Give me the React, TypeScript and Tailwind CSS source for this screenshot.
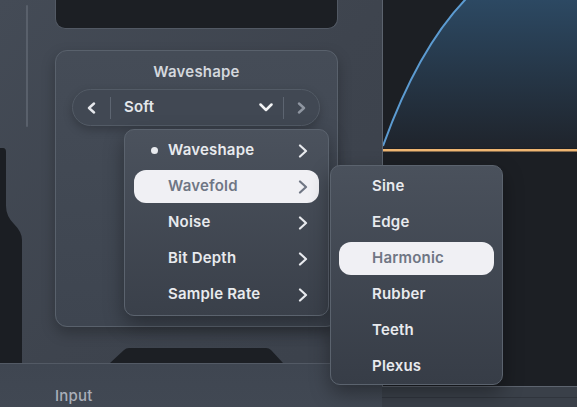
const font = { fontFamily: 'Inter, "Noto Sans", sans-serif' };

function ChevronRight({ className }: { className?: string }) {
  return (
    <svg width="10" height="14" viewBox="0 0 10 14" className={className}>
      <path d="M2 1.5 L8 7 L2 12.5" fill="none" stroke="currentColor" strokeWidth="2.2" strokeLinecap="round" strokeLinejoin="round" />
    </svg>
  );
}

function SmallChevron({ dir, className }: { dir: "left" | "right"; className?: string }) {
  return (
    <svg width="9" height="12" viewBox="0 0 9 12" className={className}>
      <path
        d={dir === "left" ? "M7 1.5 L2 6 L7 10.5" : "M2 1.5 L7 6 L2 10.5"}
        fill="none"
        stroke="currentColor"
        strokeWidth="2.4"
        strokeLinecap="round"
        strokeLinejoin="round"
      />
    </svg>
  );
}

const mainItems = [
  { label: "Waveshape", dot: true },
  { label: "Wavefold", active: true },
  { label: "Noise" },
  { label: "Bit Depth" },
  { label: "Sample Rate" },
];

const subItems = ["Sine", "Edge", "Harmonic", "Rubber", "Teeth", "Plexus"];

export default function App() {
  return (
    <div className="relative flex w-[577px] h-[407px] overflow-hidden bg-[#3d434d]" style={font}>
      {/* left panel */}
      <div className="flex flex-col w-[382px] h-full bg-gradient-to-br from-[#444b56] via-[#3e444e] to-[#3b414b]">
        <div className="flex h-[363px]">
          <div className="flex flex-col w-[55px]">
            <div className="ml-[26px] mt-[5px] w-[2px] h-[122px] rounded-full bg-[#59606b]" />
            <svg width="22" height="215" viewBox="0 0 22 215" className="mt-[21px]">
              <path d="M0 0 L3 0 Q6 0 6 4 L6 58 Q6 68 14 76 Q22 84 22 92 L22 215 L0 215 Z" fill="#1b1e23" />
            </svg>
          </div>
          <div className="flex flex-col w-[283px]">
            <div className="h-[29px] rounded-b-[10px] bg-[#1c1f24] border border-t-0 border-[#525964]" />
            <div className="mt-[21px] h-[277px] rounded-[12px] border border-[#59616c] bg-gradient-to-b from-[#454c57] to-[#3e4550] shadow-[0_6px_14px_rgba(0,0,0,0.25)]">
              <div className="pt-[11px] text-center text-[15px] leading-[20px] font-semibold tracking-[0.2px] text-[#d3d7dd]">
                Waveshape
              </div>
              <div className="mt-[7px] ml-[16px] flex items-center w-[248px] h-[37px] rounded-full border border-[#535b66] bg-[#414853] shadow-[0_4px_10px_rgba(0,0,0,0.22)]">
                <div className="flex items-center justify-center w-[37px] text-[#e6e8ec]">
                  <SmallChevron dir="left" />
                </div>
                <div className="w-px h-[22px] bg-[#5d6571]" />
                <div className="w-[148px] pl-[13px] text-[15px] font-semibold tracking-[0.2px] text-[#e4e7eb]">Soft</div>
                <svg width="14" height="9" viewBox="0 0 14 9" className="text-[#f2f3f5]">
                  <path d="M1.5 1.5 L7 7 L12.5 1.5" fill="none" stroke="currentColor" strokeWidth="2.5" strokeLinecap="round" strokeLinejoin="round" />
                </svg>
                <div className="ml-[10px] w-px h-[22px] bg-[#5d6571]" />
                <div className="flex items-center justify-center w-[35px] text-[#8f96a1]">
                  <SmallChevron dir="right" />
                </div>
              </div>
            </div>
            <svg width="173" height="15" viewBox="0 0 173 15" className="mt-[21px] ml-[55px]">
              <path d="M0 15 L14 2 Q16 0 19 0 L156 0 Q159 0 161 2 L173 15 Z" fill="#1c1f24" />
            </svg>
          </div>
        </div>
        <div className="flex-1 border-t border-[#535a65] bg-gradient-to-b from-[#3f4651] to-[#414853] pl-[55px] pt-[19px]">
          <span className="text-[15px] leading-[20px] font-medium tracking-[0.2px] text-[#a9afb9]">Input</span>
        </div>
      </div>

      {/* right graph */}
      <div className="flex flex-col flex-1">
        <div className="h-[386px] border-l border-[#5c636e] bg-[#1c1f24]">
          <svg width="194" height="386" viewBox="0 0 194 386">
            <defs>
              <linearGradient id="fill" x1="0" y1="0" x2="0" y2="1">
                <stop offset="0" stopColor="#2d4b66" />
                <stop offset="1" stopColor="#1f242c" />
              </linearGradient>
            </defs>
            <path d="M0 146 Q38 40 92 -10 L194 -10 L194 148 L0 148 Z" fill="url(#fill)" />
            <path d="M0 146 Q38 40 92 -10" fill="none" stroke="#5c9bd1" strokeWidth="2" />
            <rect x="0" y="149" width="194" height="2.5" fill="#efb672" />
          </svg>
        </div>
        <div className="flex-1 border-t border-[#5d646f] bg-[#3a4049]">
          <div className="mt-[10px] border-t border-[#30353d]" />
        </div>
      </div>

      {/* main menu */}
      <div className="absolute left-[124px] top-[129px] w-[205px] rounded-[10px] border border-[#5b636e] bg-gradient-to-b from-[#4b525d] to-[#3a404a] px-[9px] pt-[4px] pb-[4px] flex flex-col gap-[3px] shadow-[0_8px_20px_rgba(0,0,0,0.35)]">
        {mainItems.map((it) => (
          <div
            key={it.label}
            className={
              it.active
                ? "relative flex items-center h-[33px] rounded-[12px] bg-[#f0f0f4] pl-[34px] pr-[11px] text-[#6f7684]"
                : "relative flex items-center h-[33px] pl-[34px] pr-[11px] text-[#e8eaee]"
            }
          >
            {it.dot && <span className="absolute left-[17px] top-[13px] w-[7px] h-[7px] rounded-full bg-[#e8eaee]" />}
            <span className="flex-1 text-[15px] font-semibold tracking-[0.2px]">{it.label}</span>
            <ChevronRight />
          </div>
        ))}
      </div>

      {/* sub menu */}
      <div className="absolute left-[330px] top-[165px] w-[173px] h-[220px] rounded-[10px] border border-[#5b636e] bg-gradient-to-b from-[#4a515c] to-[#373d47] px-[8px] pt-[4px] flex flex-col gap-[3px] shadow-[0_8px_20px_rgba(0,0,0,0.35)]">
        {subItems.map((s) => (
          <div
            key={s}
            className={
              s === "Harmonic"
                ? "flex items-center h-[33px] rounded-[12px] bg-[#f0f0f4] pl-[33px] text-[15px] font-semibold tracking-[0.2px] text-[#6f7684]"
                : "flex items-center h-[33px] pl-[33px] text-[15px] font-semibold tracking-[0.2px] text-[#e8eaee]"
            }
          >
            {s}
          </div>
        ))}
      </div>
    </div>
  );
}
